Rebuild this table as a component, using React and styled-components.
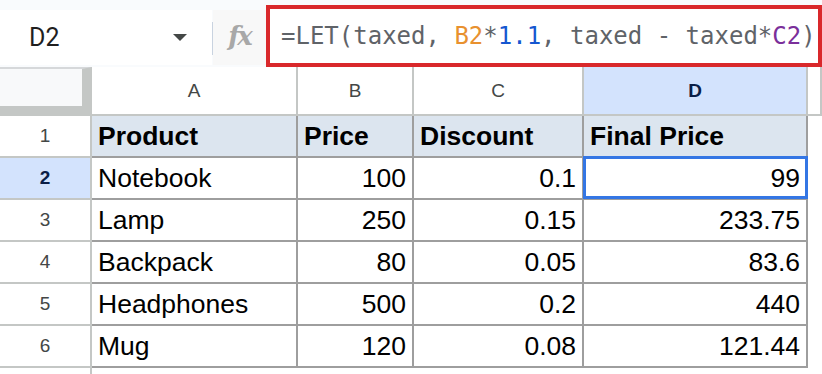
import React from "react";
import styled, { createGlobalStyle } from "styled-components";

const GlobalStyle = createGlobalStyle`
    html, body {
        margin: 0;
        padding: 0;
        background: #ffffff;
        overflow: hidden;
    }
    body {
        font-family: "Liberation Sans", Arial, sans-serif;
    }
`;

// formula split into coloured tokens
const formula = [
    { text: "=LET(taxed, ", color: "#5f6368" },
    { text: "B2", color: "#e8912f" },
    { text: "*", color: "#5f6368" },
    { text: "1.1", color: "#1557d0" },
    { text: ", taxed - taxed*", color: "#5f6368" },
    { text: "C2", color: "#7b2f9a" },
    { text: ")", color: "#5f6368" },
];

const columns = ["A", "B", "C", "D"];

const rows = [
    ["Product", "Price", "Discount", "Final Price"],
    ["Notebook", "100", "0.1", "99"],
    ["Lamp", "250", "0.15", "233.75"],
    ["Backpack", "80", "0.05", "83.6"],
    ["Headphones", "500", "0.2", "440"],
    ["Mug", "120", "0.08", "121.44"],
];

const App = () => {
    return (
        <>
            <GlobalStyle />
            <Page>
                <Toolbar>
                    <NameBox>
                        <CellRef>D2</CellRef>
                        <Caret />
                    </NameBox>
                    <Divider />
                    <FxArea>
                        <FxIcon>fx</FxIcon>
                    </FxArea>
                    <FormulaBox>
                        {formula.map((t, i) => (
                            <Token key={i} color={t.color}>
                                {t.text}
                            </Token>
                        ))}
                    </FormulaBox>
                </Toolbar>
                <Grid>
                    <Corner />
                    {columns.map(c => (
                        <ColHead key={c} active={c === "D"}>
                            {c}
                        </ColHead>
                    ))}
                    <ColHead />
                    {rows.map((row, r) => (
                        <React.Fragment key={r}>
                            <RowHead active={r === 1}>{r + 1}</RowHead>
                            {row.map((value, c) => (
                                <Cell
                                    key={c}
                                    header={r === 0}
                                    numeric={r > 0 && c > 0}
                                    selected={r === 1 && c === 3}
                                >
                                    {value}
                                </Cell>
                            ))}
                            <Spare />
                        </React.Fragment>
                    ))}
                    <RowHead />
                </Grid>
            </Page>
        </>
    );
};

const Page = styled.div`
    width: 822px;
    height: 374px;
    overflow: hidden;
`;

const Toolbar = styled.div`
    display: flex;
    height: 67px;
    background: #f9fbfd;
`;

const NameBox = styled.div`
    display: flex;
    align-items: center;
    width: 212px;
    height: 55px;
    margin-top: 10px;
    padding-left: 29px;
    padding-right: 25px;
    box-sizing: border-box;
    background: #ffffff;
`;

const CellRef = styled.span`
    font-family: Roboto, "Liberation Sans", sans-serif;
    font-size: 25px;
    color: #1f1f1f;
`;

const Caret = styled.span`
    margin-left: auto;
    width: 0;
    height: 0;
    border-left: 7px solid transparent;
    border-right: 7px solid transparent;
    border-top: 7px solid #444746;
`;

const Divider = styled.div`
    width: 1px;
    height: 33px;
    margin-top: 22px;
    background: #c9d3e0;
`;

const FxArea = styled.div`
    display: flex;
    align-items: center;
    justify-content: center;
    width: 53px;
    height: 55px;
    margin-top: 10px;
    background: #f8f8f8;
`;

const FxIcon = styled.span`
    font-family: "DejaVu Serif", "Liberation Serif", serif;
    font-style: italic;
    font-weight: 700;
    font-size: 26px;
    letter-spacing: -2px;
    color: #a8a8a8;
    margin-top: -3px;
`;

const FormulaBox = styled.div`
    flex: 1;
    display: flex;
    align-items: center;
    height: 62px;
    margin-top: 5px;
    padding-left: 11px;
    box-sizing: border-box;
    border: 4px solid #d9282b;
    background: #ffffff;
    white-space: pre;
    font-family: "DejaVu Sans Mono", "Liberation Mono", monospace;
    font-size: 24px;
`;

const Token = styled.span`
    color: ${p => p.color};
`;

const Grid = styled.div`
    display: grid;
    grid-template-columns: 92px 206px 116px 170px 224px 1fr;
    grid-template-rows: 49px repeat(6, 42px) 20px;
`;

const Corner = styled.div`
    background: #f8f9fa;
    border-right: 10px solid #c4c7c5;
    border-bottom: 10px solid #c4c7c5;
    border-top: 2px solid #d6d8da;
`;

const ColHead = styled.div`
    display: flex;
    align-items: center;
    justify-content: center;
    border-right: 2px solid #c4c7c5;
    border-bottom: 2px solid #c4c7c5;
    background: ${p => (p.active ? "#d3e3fd" : "#ffffff")};
    color: ${p => (p.active ? "#0b1f47" : "#444746")};
    font-weight: ${p => (p.active ? 700 : 400)};
    font-size: 19px;
    &:last-child {
        border-right: none;
    }
`;

const RowHead = styled.div`
    display: flex;
    align-items: center;
    justify-content: center;
    border-right: 2px solid #c4c7c5;
    border-bottom: 2px solid #c4c7c5;
    background: ${p => (p.active ? "#d3e3fd" : "#ffffff")};
    color: ${p => (p.active ? "#0b1f47" : "#444746")};
    font-weight: ${p => (p.active ? 700 : 400)};
    font-size: 19px;
    &:last-child {
        border-bottom: none;
    }
`;

const Cell = styled.div`
    position: relative;
    display: flex;
    align-items: center;
    justify-content: ${p => (p.numeric ? "flex-end" : "flex-start")};
    padding: 0 6px 0 6px;
    border-right: 2px solid #9e9e9e;
    border-bottom: 2px solid #9e9e9e;
    background: ${p => (p.header ? "#dce5ef" : "#ffffff")};
    font-size: 26.5px;
    font-weight: ${p => (p.header ? 700 : 400)};
    color: #000000;
    white-space: nowrap;
    &::after {
        content: "";
        display: ${p => (p.selected ? "block" : "none")};
        position: absolute;
        top: -2px;
        left: -1px;
        right: -2px;
        bottom: -1px;
        border: 3px solid #3476e4;
    }
`;

const Spare = styled.div`
    background: #ffffff;
`;

export default App;
